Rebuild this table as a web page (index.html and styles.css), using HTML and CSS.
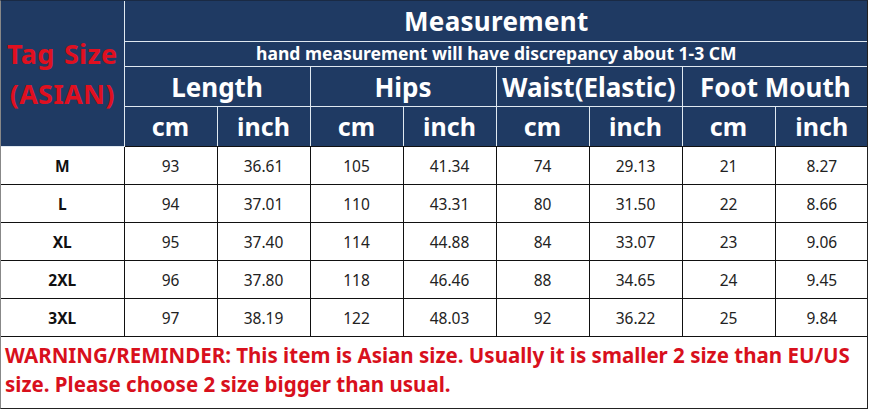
FILE: index.html
```html
<!DOCTYPE html>
<html>
<head>
<meta charset="utf-8">
<link rel="stylesheet" href="styles.css">
</head>
<body>
<div class="chart">
<table class="size-table">
<colgroup>
<col class="c-tag"><col class="c"><col class="c"><col class="c"><col class="c"><col class="c"><col class="c"><col class="c"><col class="c">
</colgroup>
<thead>
<tr class="r-title">
<th class="tag" rowspan="4">Tag Size<br>(ASIAN)</th>
<th class="title" colspan="8">Measurement</th>
</tr>
<tr class="r-note">
<th class="note" colspan="8">hand measurement will have discrepancy about 1-3 CM</th>
</tr>
<tr class="r-group">
<th colspan="2">Length</th>
<th colspan="2">Hips</th>
<th colspan="2">Waist(Elastic)</th>
<th colspan="2">Foot Mouth</th>
</tr>
<tr class="r-unit">
<th>cm</th><th>inch</th><th>cm</th><th>inch</th><th>cm</th><th>inch</th><th>cm</th><th>inch</th>
</tr>
</thead>
<tbody>
<tr><td class="size">M</td><td>93</td><td>36.61</td><td>105</td><td>41.34</td><td>74</td><td>29.13</td><td>21</td><td>8.27</td></tr>
<tr><td class="size">L</td><td>94</td><td>37.01</td><td>110</td><td>43.31</td><td>80</td><td>31.50</td><td>22</td><td>8.66</td></tr>
<tr><td class="size">XL</td><td>95</td><td>37.40</td><td>114</td><td>44.88</td><td>84</td><td>33.07</td><td>23</td><td>9.06</td></tr>
<tr><td class="size">2XL</td><td>96</td><td>37.80</td><td>118</td><td>46.46</td><td>88</td><td>34.65</td><td>24</td><td>9.45</td></tr>
<tr><td class="size">3XL</td><td>97</td><td>38.19</td><td>122</td><td>48.03</td><td>92</td><td>36.22</td><td>25</td><td>9.84</td></tr>
</tbody>
</table>
<div class="warning">WARNING/REMINDER: This item is Asian size. Usually it is smaller 2 size than EU/US size. Please choose 2 size bigger than usual.</div>
</div>
</body>
</html>
```
FILE: styles.css
```css
html, body {
  margin: 0;
  padding: 0;
  background: #ffffff;
}
.chart {
  width: 868px;
  height: 409px;
  box-sizing: border-box;
  border-top: 1px solid #1a2a44;
  border-left: 1px solid #888;
  border-right: 1px solid #222;
  border-bottom: 1px solid #222;
  font-family: "Noto Sans", "Open Sans", sans-serif;
  overflow: hidden;
}
.size-table {
  width: 866px;
  table-layout: fixed;
  border-collapse: collapse;
}
.c-tag { width: 123px; }
.c { width: 93px; }
thead th {
  background: #1f3a63;
  color: #ffffff;
  font-weight: 700;
  border: 1px solid #dfe8f0;
  padding: 0;
  text-align: center;
  line-height: 1;
}
thead tr:first-child th { border-top: none; }
thead th:first-child { border-left: none; }
thead tr th:last-child { border-right: none; }
.tag {
  color: #e01020;
  font-size: 27px;
  line-height: 40px;
  letter-spacing: 0.3px;
  word-spacing: 2px;
}
.r-title th.title {
  height: 40px;
  font-size: 26px;
  letter-spacing: 0.3px;
}
.r-note th {
  height: 24px;
  font-size: 17.5px;
}
.r-group th {
  height: 39px;
  font-size: 26px;
}
.r-unit th {
  height: 39px;
  font-size: 25px;
  border-bottom: 1px solid #111;
}
tbody td {
  height: 37px;
  padding: 0;
  border: 1px solid #111;
  text-align: center;
  font-size: 15.5px;
  color: #222;
}
tbody td:first-child { border-left: none; }
tbody td:last-child { border-right: none; }
tbody td.size {
  font-weight: 700;
  color: #111;
}
.warning {
  color: #d8101c;
  font-weight: 700;
  font-size: 20.5px;
  line-height: 29px;
  padding: 4px 0 0 4px;
}
```
